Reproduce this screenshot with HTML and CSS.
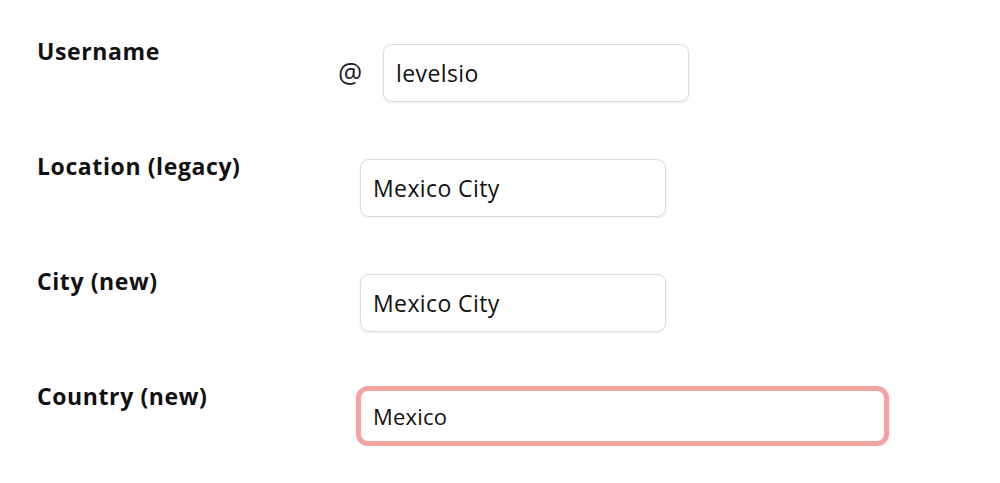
FILE: index.html
```html
<!DOCTYPE html>
<html lang="en">
<head>
<meta charset="utf-8">
<title>Profile settings</title>
<link rel="stylesheet" href="styles.css">
</head>
<body>
<form class="settings">
  <div class="row">
    <label class="label" for="username">Username</label>
    <div class="field field--prefixed">
      <span class="prefix">@</span>
      <input class="input" id="username" type="text" value="levelsio">
    </div>
  </div>
  <div class="row">
    <label class="label" for="location">Location (legacy)</label>
    <div class="field">
      <input class="input" id="location" type="text" value="Mexico City">
    </div>
  </div>
  <div class="row">
    <label class="label" for="city">City (new)</label>
    <div class="field">
      <input class="input" id="city" type="text" value="Mexico City">
    </div>
  </div>
  <div class="row">
    <label class="label" for="country">Country (new)</label>
    <div class="field field--wide">
      <input class="input input--focus" id="country" type="text" value="Mexico">
    </div>
  </div>
</form>
</body>
</html>
```

FILE: styles.css
```css
html, body {
  margin: 0;
  padding: 0;
  background: #ffffff;
}

body {
  font-family: "Open Sans", "Noto Sans", sans-serif;
  color: #111111;
}

.settings {
  display: flex;
  flex-direction: column;
  gap: 49px;
  padding: 36px 0 0 37px;
}

.row {
  display: flex;
  align-items: flex-start;
}

.label {
  width: 301px;
  flex: none;
  font-size: 23px;
  line-height: 30px;
  font-weight: 700;
  letter-spacing: 0.6px;
}

.field {
  display: flex;
  align-items: center;
  margin-top: 8px;
  padding-left: 22px;
}

.field--prefixed {
  padding-left: 0;
}

.prefix {
  width: 45px;
  font-size: 27px;
  line-height: 58px;
  color: #222;
}

.input {
  box-sizing: border-box;
  width: 306px;
  height: 58px;
  padding: 0 12px;
  border: 1px solid #dcdcdc;
  border-radius: 9px;
  background: #fff;
  box-shadow: 0 1px 3px rgba(0, 0, 0, 0.08);
  font-family: inherit;
  font-size: 23px;
  letter-spacing: 0.4px;
  color: #111;
  outline: none;
}

.field--wide {
  padding-left: 18px;
  margin-top: 5px;
}

.input--focus {
  width: 533px;
  height: 60px;
  padding: 0 12px;
  border: 5px solid #f5a3a2;
  border-radius: 12px;
  font-size: 22px;
  letter-spacing: 0.2px;
}
```
